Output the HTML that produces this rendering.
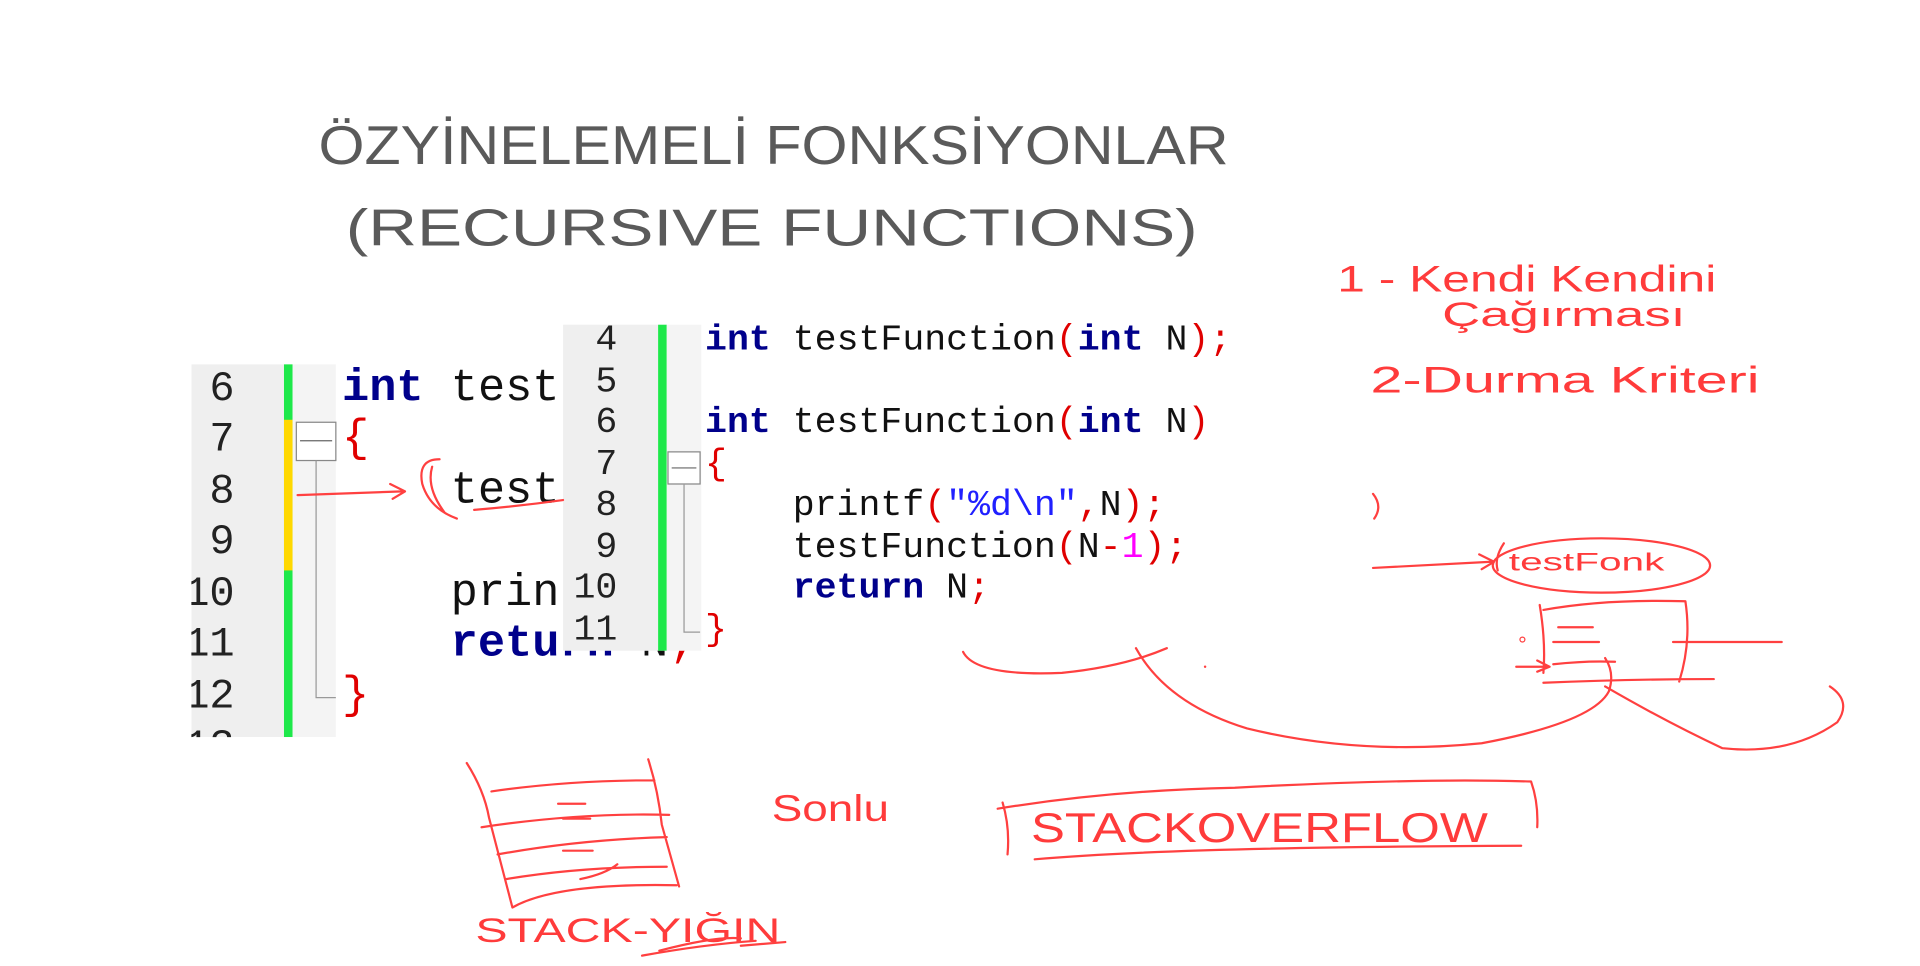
<!DOCTYPE html>
<html><head><meta charset="utf-8">
<style>
html,body{margin:0;padding:0;background:#fff;overflow:hidden}
svg{display:block}
.m{font-family:"Liberation Mono","DejaVu Sans Mono",monospace}
.k{fill:#00008b;font-weight:bold}
.r{fill:#e00000}
.hw{font-family:"Liberation Sans","DejaVu Sans",sans-serif}
.red{fill:#ff3b3b}
.ink{fill:none;stroke:#ff4040;stroke-width:1.8;stroke-linecap:round;stroke-linejoin:round}
</style></head><body>
<svg width="1920" height="966" viewBox="0 0 1555 782.4" preserveAspectRatio="none" xmlns="http://www.w3.org/2000/svg">
<defs>
<clipPath id="cl"><rect x="155" y="295" width="420" height="302"/></clipPath>
</defs>
<!-- title -->
<text class="hw" x="258" y="133" font-size="44" fill="#5a5a5a" textLength="737" lengthAdjust="spacingAndGlyphs">ÖZYİNELEMELİ FONKSİYONLAR</text>
<text class="hw" x="280" y="199" font-size="42" fill="#5a5a5a" textLength="690" lengthAdjust="spacingAndGlyphs">(RECURSIVE FUNCTIONS)</text>

<!-- left panel -->
<g clip-path="url(#cl)">
<rect x="155" y="295" width="75" height="302" fill="#efefef"/>
<rect x="230" y="295" width="7" height="302" fill="#1ee84a"/>
<rect x="230" y="340" width="7" height="122" fill="#ffd800"/>
<rect x="237" y="295" width="35" height="302" fill="#f4f4f4"/>
<g transform="translate(0,-4)">
<g class="m" font-size="34" fill="#222" text-anchor="end">
<text x="190" y="328">6</text><text x="190" y="369">7</text><text x="190" y="411">8</text><text x="190" y="452">9</text><text x="190" y="494">10</text><text x="190" y="535">11</text><text x="190" y="577">12</text><text x="190" y="618">13</text>
</g>
<g class="m" font-size="36.7" fill="#111">
<text x="277" y="328"><tspan class="k">int</tspan> testFunction(int N)</text>
<text x="277" y="369" class="r">{</text>
<text x="365" y="411">testFunction(N-1);</text>
<text x="365" y="494">printf("%d\n",N);</text>
<text x="365" y="535"><tspan class="k">return</tspan> N<tspan class="r">;</tspan></text>
<text x="277" y="577" class="r">}</text>
</g>
</g>
<rect x="240" y="342" width="32" height="31" fill="#fff" stroke="#888" stroke-width="1"/>
<line x1="243" y1="357" x2="269" y2="357" stroke="#666"/>
<path d="M256 373 V565 H272" fill="none" stroke="#999"/>
</g>

<!-- right panel -->
<rect x="456" y="263" width="560" height="264" fill="#fff"/>
<rect x="456" y="263" width="77" height="264" fill="#efefef"/>
<rect x="533" y="263" width="7" height="264" fill="#1ee84a"/>
<rect x="540" y="263" width="28" height="264" fill="#f4f4f4"/>
<g transform="translate(0,-4)">
<g class="m" font-size="29.6" fill="#222" text-anchor="end">
<text x="500" y="287">4</text><text x="500" y="321">5</text><text x="500" y="354">6</text><text x="500" y="388">7</text><text x="500" y="421">8</text><text x="500" y="455">9</text><text x="500" y="488">10</text><text x="500" y="522">11</text>
</g>
<g class="m" font-size="29.6" fill="#111">
<text x="571" y="287"><tspan class="k">int</tspan> testFunction<tspan class="r">(</tspan><tspan class="k">int</tspan> N<tspan class="r">);</tspan></text>
<text x="571" y="354"><tspan class="k">int</tspan> testFunction<tspan class="r">(</tspan><tspan class="k">int</tspan> N<tspan class="r">)</tspan></text>
<text x="571" y="388" class="r">{</text>
<text x="642" y="421">printf<tspan class="r">(</tspan><tspan fill="#2020ff">"%d\n"</tspan><tspan class="r">,</tspan>N<tspan class="r">);</tspan></text>
<text x="642" y="455">testFunction<tspan class="r">(</tspan>N<tspan class="r">-</tspan><tspan fill="#ff00ff">1</tspan><tspan class="r">);</tspan></text>
<text x="642" y="488"><tspan class="k">return</tspan> N<tspan class="r">;</tspan></text>
<text x="571" y="522" class="r">}</text>
</g>
</g>
<rect x="541" y="366" width="26" height="26" fill="#fff" stroke="#888"/>
<line x1="544" y1="379" x2="564" y2="379" stroke="#666"/>
<path d="M554 392 V512 H567" fill="none" stroke="#999"/>

<!-- red annotations near left panel -->
<path class="ink" d="M241 401 L326 398 M316 392 L328 398 L318 404"/>
<path class="ink" d="M356 372 Q338 372 342 392 Q348 412 370 420 M350 378 Q345 395 360 415"/>
<path class="ink" d="M384 413 Q420 410 456 405"/>

<!-- right notes -->
<g class="hw red">
<text x="1083" y="236" font-size="30" textLength="307" lengthAdjust="spacingAndGlyphs">1 - Kendi Kendini</text>
<text x="1168" y="264" font-size="28" textLength="197" lengthAdjust="spacingAndGlyphs">Çağırması</text>
<text x="1110" y="318" font-size="30" textLength="315" lengthAdjust="spacingAndGlyphs">2-Durma Kriteri</text>
<text x="1222" y="462" font-size="20" textLength="126" lengthAdjust="spacingAndGlyphs">testFonk</text>
<text x="385" y="763" font-size="28" textLength="247" lengthAdjust="spacingAndGlyphs">STACK-YIĞIN</text>
<text x="625" y="665" font-size="30" textLength="95" lengthAdjust="spacingAndGlyphs">Sonlu</text>
<text x="835" y="682" font-size="34" textLength="370" lengthAdjust="spacingAndGlyphs">STACKOVERFLOW</text>
</g>
<path class="ink" d="M1112 400 Q1120 410 1113 420"/>
<path class="ink" d="M1112 460 L1208 455 M1198 449 L1210 455 L1200 461"/>
<ellipse class="ink" cx="1297" cy="458" rx="88" ry="22"/>
<path class="ink" d="M1218 440 Q1210 452 1213 462"/>
<path class="ink" d="M1247 490 Q1252 520 1250 545 M1250 494 Q1300 485 1365 487 Q1370 520 1360 552 M1262 508 H1290 M1258 520 H1295 M1258 538 Q1285 535 1308 536 M1228 540 H1255 M1245 535 L1255 540 L1245 544 M1355 520 H1443 M1250 553 Q1320 550 1388 550"/>
<circle cx="1233" cy="518" r="2" fill="none" stroke="#ff4040"/>
<path class="ink" d="M780 528 Q790 548 860 545 Q910 540 945 525"/>
<path class="ink" d="M920 525 Q945 570 1010 590 Q1100 612 1200 602 Q1290 585 1303 560 Q1308 545 1300 533"/>
<path class="ink" d="M1300 556 Q1350 585 1395 606 Q1450 612 1488 585 Q1500 568 1482 556"/>
<circle cx="976" cy="540" r="1" fill="#ff4040"/>

<!-- stack drawing -->
<path class="ink" d="M378 618 Q392 640 396 662 L415 735 M525 615 Q533 640 536 668 L550 718 M398 641 Q460 632 530 632 M390 670 Q470 658 542 660 M403 692 Q470 680 540 678 M410 712 Q470 702 540 702 M415 735 Q450 715 548 717 M452 651 H474 M456 663 H478 M456 689 H480 M470 712 Q490 708 500 700"/>
<path class="ink" d="M520 774 Q570 765 612 762 M534 770 Q580 758 600 760 M600 766 L636 763" stroke-width="2.5"/>
<path class="ink" d="M808 655 Q900 640 1000 638 Q1150 630 1240 633 Q1246 650 1245 670 M812 650 Q818 670 816 692 M838 696 Q950 686 1232 685"/>
</svg>
</body></html>
